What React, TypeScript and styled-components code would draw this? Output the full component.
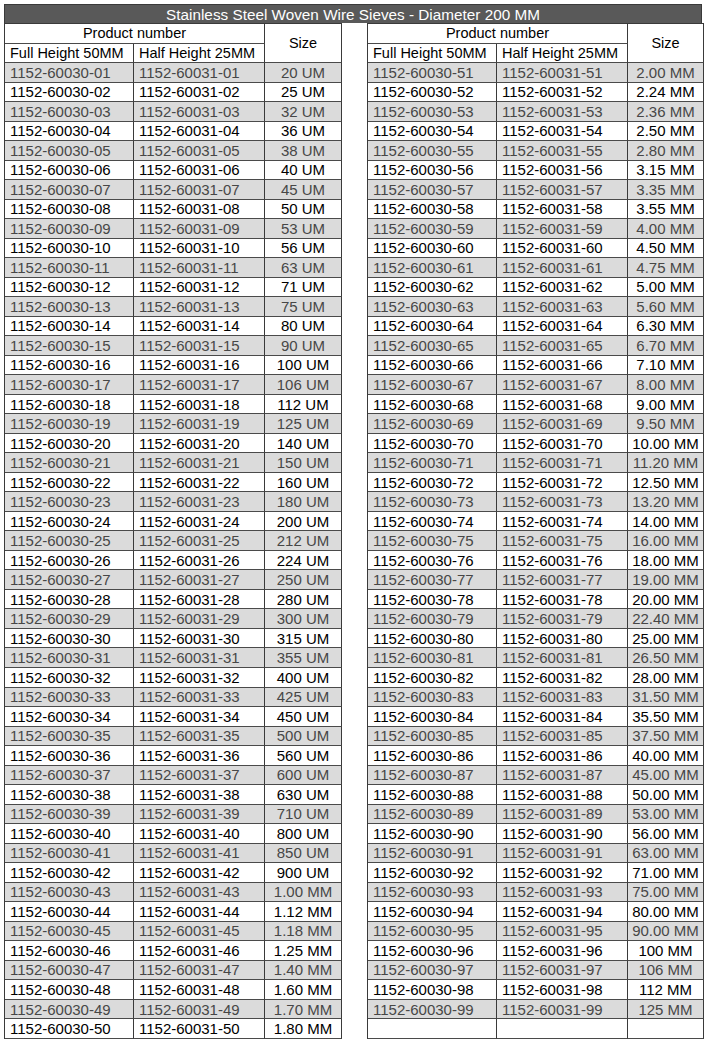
import React from "react";
import styled, { createGlobalStyle } from "styled-components";

const Global = createGlobalStyle`
  html, body { margin: 0; padding: 0; background: #ffffff; }
  body { font-family: "Liberation Sans", Arial, sans-serif; }
`;

const Page = styled.div`
  padding: 4px 0 0 4px;
  width: 698px;
`;

const TitleBar = styled.div`
  height: 19px;
  background: #595959;
  color: #ffffff;
  font-size: 15.3px;
  line-height: 19px;
  text-align: center;
  border: 1px solid #3a3a3a;
  border-bottom: none;
  box-sizing: border-box;
`;

const Tables = styled.div`
  display: flex;
  gap: 25px;
  align-items: flex-start;
`;

const Grid = styled.div<{ $sizeWidth: number }>`
  display: grid;
  grid-template-columns: 129px 131px ${(p) => p.$sizeWidth}px;
  grid-template-rows: 20px 19px;
  grid-auto-rows: 19.52px;
  border-left: 1px solid #3a3a3a;
  border-top: 1px solid #3a3a3a;
  font-size: 15px;
  box-sizing: border-box;
`;

const Cell = styled.div<{ $shade?: boolean; $center?: boolean }>`
  box-sizing: border-box;
  border-right: 1px solid #3a3a3a;
  border-bottom: 1px solid #4a4a4a;
  background: ${(p) => (p.$shade ? "#dbdbdb" : "#ffffff")};
  color: ${(p) => (p.$shade ? "#474747" : "#000000")};
  display: flex;
  align-items: center;
  justify-content: ${(p) => (p.$center ? "center" : "flex-start")};
  padding: 0 0 0 ${(p) => (p.$center ? "0" : "5px")};
  white-space: nowrap;
  overflow: hidden;
  line-height: 1;
`;

const HeadCell = styled(Cell)`
  font-size: 14.5px;
`;

const HeadGroup = styled(HeadCell)`
  grid-column: 1 / span 2;
  justify-content: center;
  padding: 0;
`;

const SizeHead = styled(HeadCell)`
  grid-column: 3;
  grid-row: 1 / span 2;
  justify-content: center;
  padding: 0;
`;

type Row = { full: string; half: string; size: string } | null;

const leftSizes = [
  "20 UM", "25 UM", "32 UM", "36 UM", "38 UM", "40 UM", "45 UM", "50 UM", "53 UM", "56 UM",
  "63 UM", "71 UM", "75 UM", "80 UM", "90 UM", "100 UM", "106 UM", "112 UM", "125 UM", "140 UM",
  "150 UM", "160 UM", "180 UM", "200 UM", "212 UM", "224 UM", "250 UM", "280 UM", "300 UM", "315 UM",
  "355 UM", "400 UM", "425 UM", "450 UM", "500 UM", "560 UM", "600 UM", "630 UM", "710 UM", "800 UM",
  "850 UM", "900 UM", "1.00 MM", "1.12 MM", "1.18 MM", "1.25 MM", "1.40 MM", "1.60 MM", "1.70 MM", "1.80 MM",
];

const rightSizes = [
  "2.00 MM", "2.24 MM", "2.36 MM", "2.50 MM", "2.80 MM", "3.15 MM", "3.35 MM", "3.55 MM", "4.00 MM", "4.50 MM",
  "4.75 MM", "5.00 MM", "5.60 MM", "6.30 MM", "6.70 MM", "7.10 MM", "8.00 MM", "9.00 MM", "9.50 MM", "10.00 MM",
  "11.20 MM", "12.50 MM", "13.20 MM", "14.00 MM", "16.00 MM", "18.00 MM", "19.00 MM", "20.00 MM", "22.40 MM", "25.00 MM",
  "26.50 MM", "28.00 MM", "31.50 MM", "35.50 MM", "37.50 MM", "40.00 MM", "45.00 MM", "50.00 MM", "53.00 MM", "56.00 MM",
  "63.00 MM", "71.00 MM", "75.00 MM", "80.00 MM", "90.00 MM", "100 MM", "106 MM", "112 MM", "125 MM",
];

const pad = (n: number) => (n < 10 ? "0" + n : String(n));

const makeRows = (sizes: string[], start: number, total: number): Row[] => {
  const rows: Row[] = sizes.map((size, i) => ({
    full: `1152-60030-${pad(start + i)}`,
    half: `1152-60031-${pad(start + i)}`,
    size,
  }));
  while (rows.length < total) rows.push(null);
  return rows;
};

const leftRows = makeRows(leftSizes, 1, 50);
const rightRows = makeRows(rightSizes, 51, 50);

const SieveTable: React.FC<{ rows: Row[]; sizeWidth: number }> = ({ rows, sizeWidth }) => (
  <Grid $sizeWidth={sizeWidth}>
    <HeadGroup>Product number</HeadGroup>
    <SizeHead>Size</SizeHead>
    <HeadCell>Full Height 50MM</HeadCell>
    <HeadCell>Half Height 25MM</HeadCell>
    {rows.map((r, i) => {
      const shade = r !== null && i % 2 === 0;
      return (
        <React.Fragment key={i}>
          <Cell $shade={shade}>{r ? r.full : ""}</Cell>
          <Cell $shade={shade}>{r ? r.half : ""}</Cell>
          <Cell $shade={shade} $center>{r ? r.size : ""}</Cell>
        </React.Fragment>
      );
    })}
  </Grid>
);

export default function App() {
  return (
    <Page>
      <Global />
      <TitleBar>Stainless Steel Woven Wire Sieves - Diameter 200 MM</TitleBar>
      <Tables>
        <SieveTable rows={leftRows} sizeWidth={77} />
        <SieveTable rows={rightRows} sizeWidth={76} />
      </Tables>
    </Page>
  );
}
